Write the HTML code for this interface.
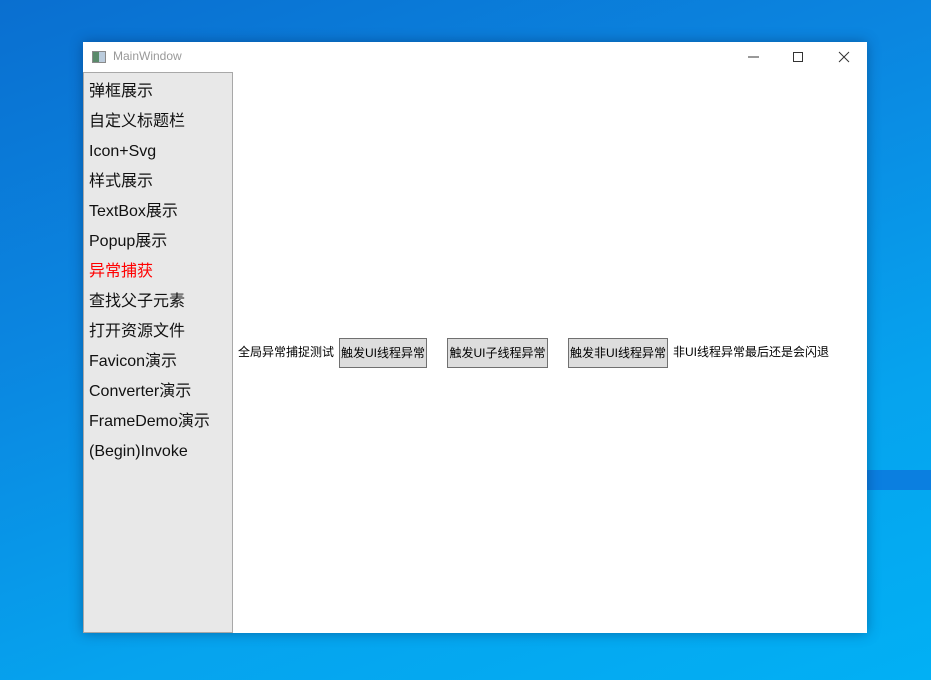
<!DOCTYPE html>
<html><head><meta charset="utf-8"><style>
body{margin:0;width:931px;height:680px;overflow:hidden;position:relative;
background:linear-gradient(160deg,#0a6fd0 0%,#0b86e0 35%,#06a3ee 70%,#02b0f4 100%);
font-family:"Liberation Sans","Noto Sans CJK SC",sans-serif;}
.glow{position:absolute;left:867px;top:470px;width:64px;height:20px;background:#0b7fe0;}
.win{position:absolute;left:83px;top:42px;width:784px;height:591px;background:#fff;box-shadow:0 0 12px rgba(0,40,90,.45);}
.title{position:absolute;left:0;top:0;width:784px;height:30px;}
.title .t{position:absolute;left:30px;top:7px;font-size:12px;color:#999;}
.ico{position:absolute;left:9px;top:9px;width:12px;height:10px;border:1px solid #8a8a8a;background:linear-gradient(90deg,#5a8a6a 50%,#bcd 50%);}
.side{position:absolute;left:0;top:30px;width:148px;height:559px;background:#e8e8e8;border:1px solid #a8a8a8;}
.side div{position:absolute;left:5px;margin-top:2px;font-size:16px;line-height:20px;height:20px;color:#111;white-space:nowrap}
.lbl{position:absolute;font-size:12px;color:#000;white-space:nowrap}
.btn{position:absolute;top:296px;height:30px;border:1px solid #707070;background:#dddddd;font-size:12px;line-height:28px;text-align:center;box-sizing:border-box;white-space:nowrap}
</style></head><body>
<div class="glow"></div>
<div class="win">
 <div class="title"><div class="ico"></div><div class="t">MainWindow</div>
 <svg style="position:absolute;left:660px;top:8px" width="120" height="14">
  <line x1="5" y1="7" x2="16" y2="7" stroke="#333"/>
  <rect x="50.5" y="2.5" width="9" height="9" fill="none" stroke="#333"/>
  <path d="M96 2L106 12M106 2L96 12" stroke="#333"/>
 </svg></div>
 <div class="side">
  <div style="top:7px">弹框展示</div>
  <div style="top:37px">自定义标题栏</div>
  <div style="top:67px">Icon+Svg</div>
  <div style="top:97px">样式展示</div>
  <div style="top:127px">TextBox展示</div>
  <div style="top:157px">Popup展示</div>
  <div style="top:187px;color:#f00">异常捕获</div>
  <div style="top:217px">查找父子元素</div>
  <div style="top:247px">打开资源文件</div>
  <div style="top:277px">Favicon演示</div>
  <div style="top:307px">Converter演示</div>
  <div style="top:337px">FrameDemo演示</div>
  <div style="top:367px">(Begin)Invoke</div>
 </div>
 <div class="lbl" style="left:155px;top:301px">全局异常捕捉测试</div>
 <div class="btn" style="left:256px;width:88px">触发UI线程异常</div>
 <div class="btn" style="left:364px;width:101px">触发UI子线程异常</div>
 <div class="btn" style="left:485px;width:100px">触发非UI线程异常</div>
 <div class="lbl" style="left:590px;top:301px">非UI线程异常最后还是会闪退</div>
</div>
</body></html>
